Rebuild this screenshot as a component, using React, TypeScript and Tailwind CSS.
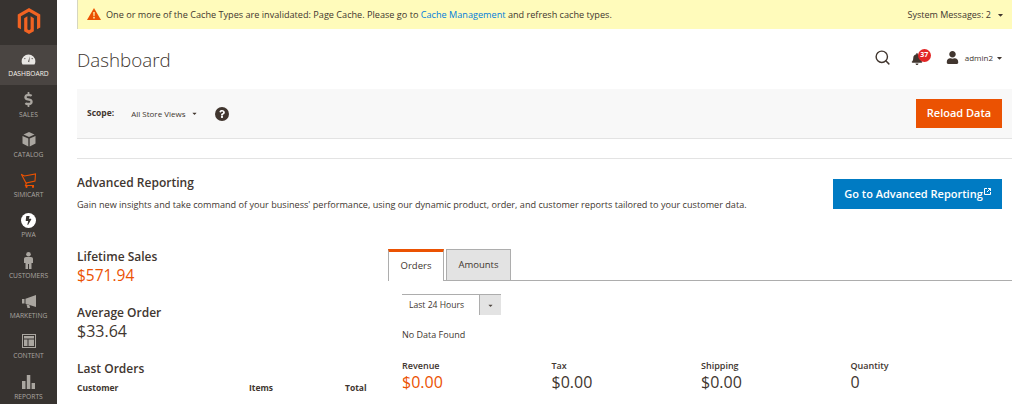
import { ReactNode } from "react";
import { FaMagento, FaDollarSign, FaBolt, FaCaretDown, FaUser, FaBell, FaQuestion } from "react-icons/fa";
import { FiSearch } from "react-icons/fi";

const GaugeIcon = () => (
  <svg width="15" height="11" viewBox="0 0 16 12" fill="#e8e6e3">
    <path d="M8 .5A7.5 7.5 0 0 0 .5 8c0 1.400.3 2.600 1 3.500h13c.7-.9 1-2.100 1-3.500A7.500 7.500 0 0 0 8 .5z" />
    <path d="M9.500 2.500 7.500 8.500l1.300.5z" fill="#4a4542" />
    <circle cx="4" cy="5" r=".7" fill="#4a4542" />
    <circle cx="12" cy="5" r=".7" fill="#4a4542" />
  </svg>
);

const BoxIcon = () => (
  <svg width="14" height="15" viewBox="0 0 14 15" fill="#aaa6a0">
    <path d="M7 0 1.500 2.500 7 5l5.500-2.500z" />
    <path d="M.5 4v7.500L6.300 14.500V6.500z" />
    <path d="M13.500 4v7.500L7.700 14.500V6.500z" />
  </svg>
);

const CartIcon = () => (
  <svg width="16" height="15" viewBox="0 0 16 15" fill="none" stroke="#eb5202" strokeWidth="1.100">
    <path d="M.5 1.500 3.500 3 14.500 1 14 8 5 10z" />
    <path d="M5.500 10 4.500 12.500H13" />
    <circle cx="5.500" cy="13.800" r=".6" fill="#eb5202" />
    <circle cx="12" cy="13.800" r=".6" fill="#eb5202" />
  </svg>
);

const PwaIcon = () => (
  <span className="flex h-[15px] w-[15px] items-center justify-center rounded-full bg-white">
    <FaBolt className="h-[9px] w-[9px] text-[#373330]" />
  </span>
);

const PersonIcon = () => (
  <svg width="9" height="17" viewBox="0 0 9 17" fill="#aaa6a0">
    <circle cx="4.500" cy="2.300" r="2.300" />
    <path d="M2 5h5c1.200 0 2 .8 2 2v4H7.500v6H5V12H4v5H1.500v-6H0V7c0-1.200.8-2 2-2z" />
  </svg>
);

const MegaphoneIcon = () => (
  <svg width="14" height="13" viewBox="0 0 14 13" fill="#aaa6a0">
    <path d="M0 4h2.500v4.500H0z" />
    <path d="M3.500 3.800 14 0v12L3.500 8.700z" />
    <path d="M4.500 9.300 7.500 10.300 8 13H5.500z" />
  </svg>
);

const LayoutIcon = () => (
  <svg width="14" height="14" viewBox="0 0 14 14" fill="#aaa6a0">
    <path d="M0 0h14v14H0zM1 1v12h12V1z" />
    <path d="M2 2h10v2.500H2zM2 5.500h3.500V12H2zM6.500 5.500H12V12H6.500z" />
  </svg>
);

const BarsIcon = () => (
  <svg width="13" height="14" viewBox="0 0 13 14" fill="#aaa6a0">
    <path d="M0 6h3.500v8H0zM4.800 0h3.500v14H4.800zM9.600 8H13v6H9.600z" />
  </svg>
);

const navItems: { label: string; icon: ReactNode; active?: boolean }[] = [
  { label: "Dashboard", icon: <GaugeIcon />, active: true },
  { label: "Sales", icon: <FaDollarSign className="h-[15px] w-[15px] text-[#aaa6a0]" /> },
  { label: "Catalog", icon: <BoxIcon /> },
  { label: "Simicart", icon: <CartIcon /> },
  { label: "PWA", icon: <PwaIcon /> },
  { label: "Customers", icon: <PersonIcon /> },
  { label: "Marketing", icon: <MegaphoneIcon /> },
  { label: "Content", icon: <LayoutIcon /> },
  { label: "Reports", icon: <BarsIcon /> },
];

const Sidebar = () => (
  <aside className="flex h-[404px] w-[57px] shrink-0 flex-col overflow-hidden bg-[#373330]">
    <div className="flex h-[45px] shrink-0 items-center justify-center pb-1">
      <FaMagento className="h-[26px] w-[26px] text-[#f26322]" />
    </div>
    {navItems.map((item) => (
      <div
        key={item.label}
        className={`flex h-[40.300px] shrink-0 flex-col items-center justify-end pb-[6px] ${item.active ? "bg-[#4a4542]" : ""}`}
      >
        <div className="mb-[1px] flex h-[18px] items-center justify-center">{item.icon}</div>
        <span className={`text-[6.700px] leading-[10px] uppercase ${item.active ? "text-[#f7f3eb]" : "text-[#aaa6a0]"}`}>
          {item.label}
        </span>
      </div>
    ))}
  </aside>
);

const Stat = ({ label, value, accent }: { label: string; value: string; accent?: boolean }) => (
  <div className="w-[149.500px]">
    <div className="text-[9px] leading-[14px] font-semibold text-[#41362f]">{label}</div>
    <div className={`text-[16px] leading-[18px] ${accent ? "text-[#eb5202]" : "text-[#41362f]"}`}>{value}</div>
  </div>
);

export default function App() {
  return (
    <div className="flex h-[404px] w-[1024px] overflow-hidden bg-white font-['Open_Sans',sans-serif] text-[#41362f]">
      <Sidebar />
      <main className="w-[955px] shrink-0 pl-5">
        {/* System message banner */}
        <div className="flex h-[29px] items-center justify-between border-l border-[#d6d6c0] bg-[#fffbbb] pr-[9px] pl-[9px] text-[9.150px]">
          <div className="flex items-center gap-[5px]">
            <svg width="14" height="12" viewBox="0 0 14 12">
              <path d="M7 0 14 12H0z" fill="#eb5202" />
              <path d="M6.300 4h1.400l-.2 4.200h-1zM6.300 9h1.400v1.400H6.300z" fill="#fffbbb" />
            </svg>
            <span>
              One or more of the Cache Types are invalidated: Page Cache. Please go to{" "}
              <span className="text-[#007bdb]">Cache Management</span> and refresh cache types.
            </span>
          </div>
          <div className="flex items-center gap-[7px] text-[9px]">
            <span>System Messages: 2</span>
            <FaCaretDown className="h-[8px] w-[5px]" />
          </div>
        </div>

        {/* Page header */}
        <div className="flex h-[60px] items-center justify-between pr-[10px]">
          <h1 className="mt-[2px] text-[18.800px] font-light text-[#41362f]">Dashboard</h1>
          <div className="mb-[3px] flex items-center text-[8px]">
            <FiSearch className="h-[17px] w-[17px] text-[#41362f]" strokeWidth={2} />
            <div className="relative ml-[20px] mr-[15px] h-[16px] w-[20px]">
              <FaBell className="absolute top-[3px] left-0 h-[12px] w-[12px] text-[#41362f]" />
              <span className="absolute -top-[1px] left-[7px] flex h-[13px] w-[13px] items-center justify-center rounded-full bg-[#e22626] text-[7px] font-bold text-white">
                37
              </span>
            </div>
            <FaUser className="h-[13px] w-[13px] text-[#41362f]" />
            <span className="ml-[6px]">admin2</span>
            <FaCaretDown className="ml-[4px] h-[8px] w-[5px]" />
          </div>
        </div>

        {/* Scope bar */}
        <div className="flex h-[50px] items-center justify-between border-b border-[#e3e3e3] bg-[#f8f8f8] pr-[10px] pl-[10px]">
          <div className="flex items-center text-[8px]">
            <span className="text-[8.500px] font-bold">Scope:</span>
            <span className="ml-[17px]">All Store Views</span>
            <FaCaretDown className="ml-[6px] h-[7px] w-[5px]" />
            <span className="ml-[18px] flex h-[14px] w-[14px] items-center justify-center rounded-full bg-[#41362f]">
              <FaQuestion className="h-[8px] w-[8px] text-white" />
            </span>
          </div>
          <button className="h-[29px] w-[86px] bg-[#eb5202] text-[11px] font-semibold text-white">Reload Data</button>
        </div>

        <div className="mt-[19px] border-t border-[#e3e3e3]" />

        {/* Advanced reporting */}
        <div className="flex items-center justify-between pr-[10px] pt-[15px]">
          <div>
            <h2 className="text-[12px] leading-[18px] font-semibold">Advanced Reporting</h2>
            <p className="mt-[6px] text-[9.120px] leading-[14px]">
              Gain new insights and take command of your business' performance, using our dynamic product, order, and customer reports tailored to your customer data.
            </p>
          </div>
          <button className="mt-[2px] flex h-[30px] w-[169px] shrink-0 items-center justify-center bg-[#007bc3] text-[11px] font-semibold text-white">
            Go to Advanced Reporting
            <svg className="mb-[5px] ml-[1px]" width="7" height="7" viewBox="0 0 7 7" fill="none" stroke="white">
              <path d="M3 .5H.5v6h6V4M3 4l3.500-3.500M4 .5h2.500V3" />
            </svg>
          </button>
        </div>

        {/* Totals and chart */}
        <div className="flex pt-[37px]">
          <div className="w-[311px] shrink-0">
            <h3 className="text-[12px] leading-[16px] font-semibold">Lifetime Sales</h3>
            <div className="text-[15.500px] leading-[21px] font-medium text-[#eb5202]">$571.94</div>
            <h3 className="mt-[19px] text-[12px] leading-[16px] font-semibold">Average Order</h3>
            <div className="text-[16px] leading-[21px]">$33.64</div>
            <h3 className="mt-[19px] text-[12px] leading-[16px] font-semibold">Last Orders</h3>
            <div className="mt-[5px] flex text-[8.500px] leading-[12px] font-bold">
              <span className="w-[172px]">Customer</span>
              <span className="w-[96px]">Items</span>
              <span>Total</span>
            </div>
          </div>
          <div className="flex-1">
            <div className="flex h-[32px] items-end gap-[2px] border-b border-[#adadad]">
              <div className="-mb-px flex h-[32px] w-[56px] items-center justify-center border-x border-t-[3px] border-x-[#adadad] border-t-[#eb5202] bg-white text-[9.500px]">
                Orders
              </div>
              <div className="flex h-[31px] w-[65px] items-center justify-center border-x border-t border-[#adadad] bg-[#e3e3e3] text-[9.500px]">
                Amounts
              </div>
            </div>
            <div className="pl-[14px]">
              <div className="mt-[13px] flex h-[21px] w-[99px] border-t border-[#adadad] text-[8.600px]">
                <div className="flex flex-1 items-center pl-[7px]">Last 24 Hours</div>
                <div className="flex w-[22px] items-center justify-center border-l border-[#adadad] bg-[#e3e3e3]">
                  <FaCaretDown className="h-[7px] w-[5px] text-[#514943]" />
                </div>
              </div>
              <p className="mt-[13px] text-[9px] leading-[14px]">No Data Found</p>
              <div className="mt-[17px] flex">
                <Stat label="Revenue" value="$0.00" accent />
                <Stat label="Tax" value="$0.00" />
                <Stat label="Shipping" value="$0.00" />
                <Stat label="Quantity" value="0" />
              </div>
            </div>
          </div>
        </div>
      </main>
    </div>
  );
}
